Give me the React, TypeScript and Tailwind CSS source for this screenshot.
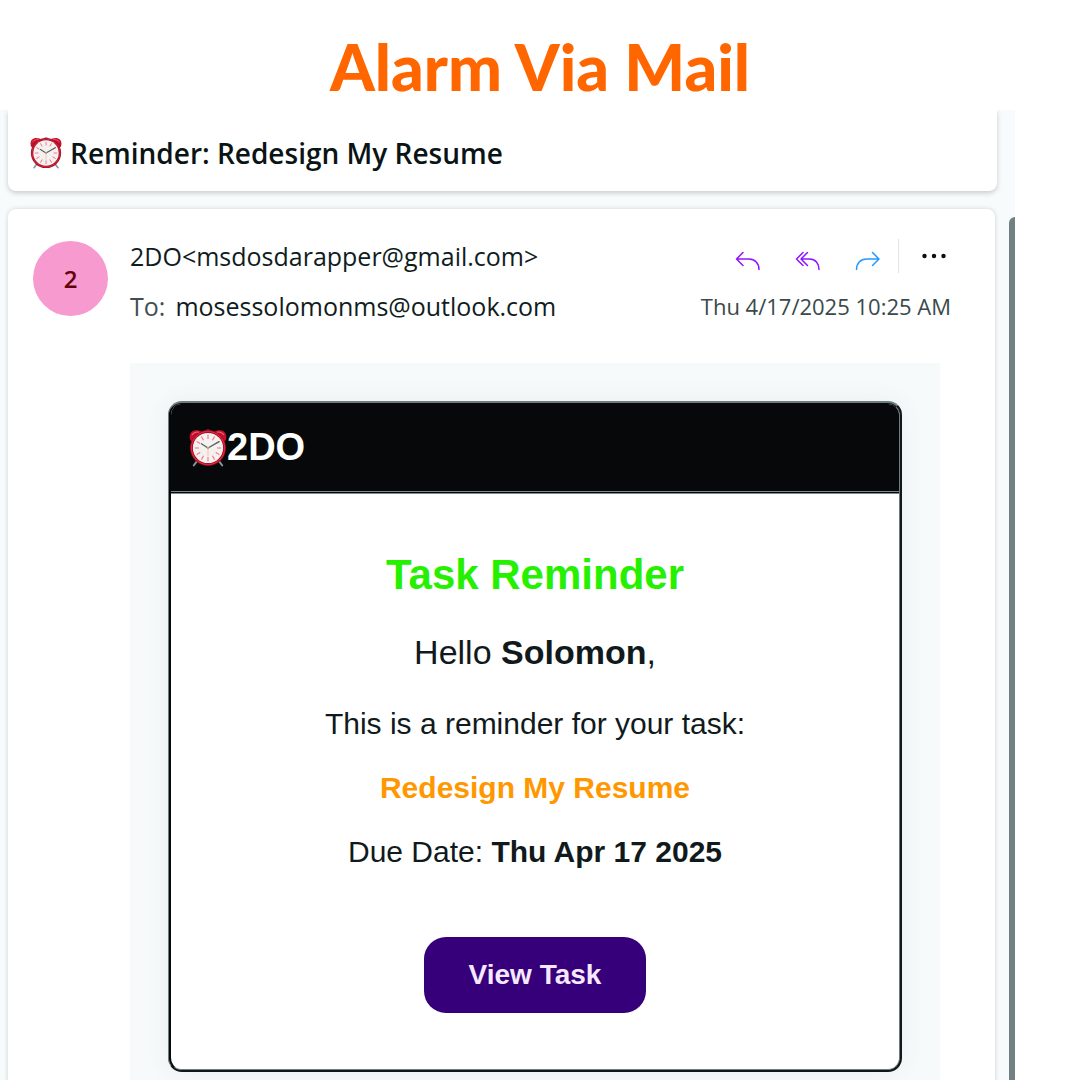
import React from "react";

const ticks = [0, 30, 60, 90, 120, 150, 180, 210, 240, 270, 300, 330];

function AlarmClock({ className }: { className: string }) {
  return (
    <svg viewBox="0 0 36 36" className={className} aria-hidden="true">
      <path d="M8 30 4.500 34.500M28 30l3.500 4.500" stroke="#8795a0" strokeWidth="1.800" strokeLinecap="round" />
      <rect x="16" y="0.5" width="4" height="4" rx="1" fill="#6b4a50" />
      <path d="M1 10C-.5 5 2.500 1.200 7 1.200c3 0 4.800 1 5.800 2.300L3.500 11.300C2.600 11.700 1.300 11.200 1 10Z" fill="#c5102c" />
      <path d="M35 10C36.500 5 33.500 1.200 29 1.200c-3 0-4.800 1-5.800 2.300l9.300 7.800c.9.400 2.200-.1 2.500-1.300Z" fill="#c5102c" />
      <path d="M3 5.500C4.500 3.300 7 2.500 9.500 3M33 5.500C31.500 3.300 29 2.500 26.500 3" stroke="#ef6077" strokeWidth="1" fill="none" strokeLinecap="round" />
      <circle cx="18" cy="18" r="17" fill="#a90c22" />
      <circle cx="18" cy="18" r="15.700" fill="none" stroke="#d92c44" strokeWidth="1" />
      <circle cx="18" cy="18" r="14.300" fill="#f4f1ee" />
      {ticks.map((angle) => (
        <path key={angle} d="M18 5.500v4" stroke="#f06f8c" strokeWidth="1" transform={`rotate(${angle} 18 18)`} />
      ))}
      <path d="M18 18v8" stroke="#e3b9a6" strokeWidth="0.700" />
      <path d="M11.800 14 18 18l10.500-6" fill="none" stroke="#59636a" strokeWidth="1.300" strokeLinecap="round" strokeLinejoin="round" />
      <circle cx="18" cy="18" r="1.100" fill="#c9a06a" />
    </svg>
  );
}

function ReplyArrow({ double = false }: { double?: boolean }) {
  return (
    <svg viewBox="0 0 26 20" className="h-5 w-[26px]" fill="none" stroke="#8f14ff" strokeWidth="1.500" strokeLinecap="round" strokeLinejoin="round" aria-hidden="true">
      {double ? (
        <path d="M8 1.500 1.500 8 8 14.500M12.500 1.500 6 8l6.500 6.500M6 8h8.500c6 0 9.500 4.500 9.500 10.500" />
      ) : (
        <path d="M8 1.500 1.500 8 8 14.500M1.500 8h12.500c6 0 10 4.500 10 10.500" />
      )}
    </svg>
  );
}

function ForwardArrow() {
  return (
    <svg viewBox="0 0 26 20" className="h-5 w-[26px]" fill="none" stroke="#2499ff" strokeWidth="1.500" strokeLinecap="round" strokeLinejoin="round" aria-hidden="true">
      <path d="M17.500 1.500 24 8l-6.500 6.500M24 8H11.500c-6 0-10 4.500-10 10.500" />
    </svg>
  );
}

function MessageHeader() {
  return (
    <header className="flex items-start pr-11 pl-[25px]">
      <div className="mt-8 flex size-[75px] shrink-0 items-center justify-center rounded-full bg-[#f79ad0] text-2xl font-semibold text-[#64000c]">
        2
      </div>
      <div className="mt-[22px] ml-[22px] flex-1 text-[25px] leading-[50px] text-[#101c1e]">
        <div className="flex items-center justify-between">
          <span>2DO&lt;msdosdarapper@gmail.com&gt;</span>
          <div className="flex items-center">
            <button aria-label="Reply" className="mt-2.5 mr-[34px]"><ReplyArrow /></button>
            <button aria-label="Reply all" className="mt-2.5 mr-[34px]"><ReplyArrow double /></button>
            <button aria-label="Forward" className="mt-2.5 mr-[17px]"><ForwardArrow /></button>
            <span className="mr-[22px] h-[34px] w-px bg-[#dfe6e7]" />
            <button aria-label="More actions" className="mr-1">
              <svg viewBox="0 0 26 6" className="h-1.5 w-[26px]" fill="#0b0f10" aria-hidden="true">
                <circle cx="3.500" cy="3" r="2.200" />
                <circle cx="13" cy="3" r="2.200" />
                <circle cx="22.500" cy="3" r="2.200" />
              </svg>
            </button>
          </div>
        </div>
        <div className="flex items-center justify-between">
          <span>
            <span className="mr-2.5 text-[#3f4f51]">To:</span>mosessolomonms@outlook.com
          </span>
          <time className="text-[22px] text-[#3a494b]">Thu 4/17/2025 10:25 AM</time>
        </div>
      </div>
    </header>
  );
}

function ReminderCard() {
  return (
    <article className="overflow-hidden rounded-[14px] border-t-2 border-r-2 border-b-2 border-l border-t-[#6f7d7e] border-r-[#11181a] border-b-[#11181a] border-l-[#6f7d7e] bg-[#11181a] font-['Liberation_Sans',sans-serif] text-[#101a1c] shadow-[0_0_24px_rgba(60,80,80,0.07)]">
      <div className="overflow-hidden rounded-xl border-t border-r border-b border-l-2 border-t-[#060809] border-r-[#6f7d7e] border-b-[#6f7d7e] border-l-[#060809] bg-white">
        <div className="flex h-[90px] items-center border-b-3 border-double border-[#7b898b] bg-[#060809] px-[18px] text-[38px] font-bold text-white">
          <AlarmClock className="size-[38px]" />
          <span>2DO</span>
        </div>
        <div className="flex flex-col items-center pt-14 pb-14 text-center text-[30px] leading-9">
          <h2 className="text-[42px] leading-[50px] font-bold text-[#25f000]">Task Reminder</h2>
          <p className="mt-[30px] text-[34px] leading-[44px]">
            Hello <b>Solomon</b>,
          </p>
          <p className="mt-8">This is a reminder for your task:</p>
          <p className="mt-7 font-bold text-[#ff9800]">Redesign My Resume</p>
          <p className="mt-7">
            Due Date: <b>Thu Apr 17 2025</b>
          </p>
          <a href="#task" className="mt-[67px] rounded-[22px] bg-[#35007a] px-[45px] py-5 text-[28px] font-bold text-[#f5e8ff]">
            View Task
          </a>
        </div>
      </div>
    </article>
  );
}

export default function App() {
  return (
    <div className="flex h-screen flex-col overflow-hidden bg-white font-['Open_Sans','Noto_Sans',sans-serif]">
      <h1 className="h-[110px] pt-6 text-center font-['Lato',sans-serif] text-[64px] leading-[86px] font-black text-[#ff6600]">
        Alarm Via Mail
      </h1>
      <main className="mr-[65px] flex min-h-0 flex-1 overflow-hidden bg-[#f7fbfb] pl-2">
        <div className="flex min-w-0 flex-1 flex-col">
          <section className="flex h-[81px] shrink-0 items-center rounded-b-lg bg-white px-[22px] pt-1 shadow-[0_2px_5px_rgba(50,70,70,0.25)]">
            <AlarmClock className="mr-2 size-8" />
            <h2 className="text-[28px] font-semibold text-[#0b1415]">Reminder: Redesign My Resume</h2>
          </section>
          <section className="mt-[18px] mr-0.5 flex-1 rounded-t-lg bg-white shadow-[0_0_4px_rgba(50,70,70,0.22)]">
            <MessageHeader />
            <div className="mt-8 mr-[55px] ml-[122px] bg-[#f7fafb] px-[38px] pt-[38px] pb-10">
              <ReminderCard />
            </div>
          </section>
        </div>
        <div className="mt-[107px] ml-3 w-1.5 rounded-tl-md bg-[#718182]" />
      </main>
    </div>
  );
}
